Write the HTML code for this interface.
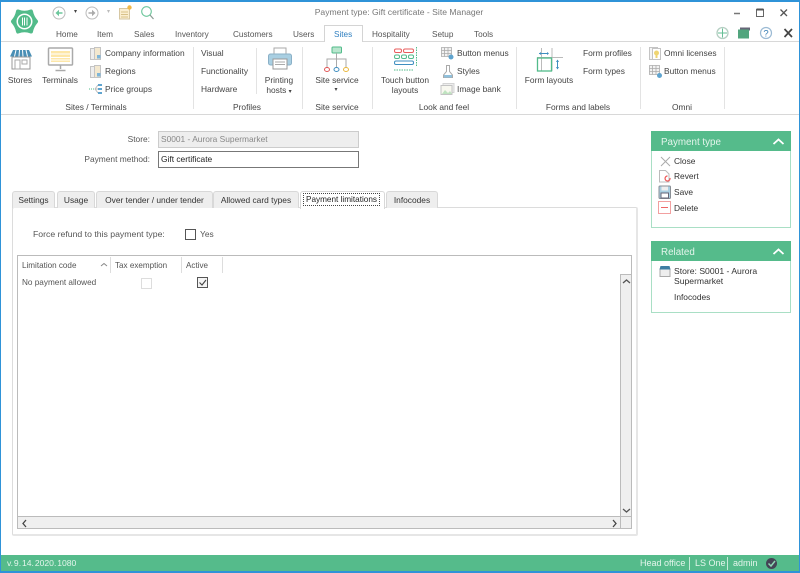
<!DOCTYPE html>
<html><head><meta charset="utf-8"><style>
html,body{margin:0;padding:0;background:#fff}
#r{position:relative;width:800px;height:573px;overflow:hidden;background:#fff;font-family:"Liberation Sans",sans-serif;font-size:8.4px;color:#444;filter:blur(.3px)}
#r div,#r svg{position:absolute}
.t{white-space:nowrap;line-height:11px}
.c{text-align:center;transform:translateX(-50%)}
.r{transform:translateX(-100%)}
.sep{width:1px;background:#e3e3e3}
.m{font-size:8.2px;top:29px;color:#555}
.tab{height:16px;line-height:17px;text-align:center;background:#eee;border:1px solid #d8d8d8;border-bottom:0;border-radius:3px 3px 0 0;color:#333;font-size:8.4px;top:191px}
</style></head><body><div id="r">
<div style="left:0;top:0;width:800px;height:2px;background:#2f93d8"></div>
<div style="left:0;top:0;width:1px;height:573px;background:#2f93d8"></div>
<div style="right:0;top:0;width:1px;height:573px;background:#2f93d8"></div>
<div style="left:0;top:571px;width:800px;height:2px;background:#2f93d8"></div>

<svg style="left:10px;top:8px" width="30" height="27" viewBox="0 0 30 27"><path d="M8 3.500Q14.500 6 21 3.500Q22 9 26 13.500Q22 18 21 23.500Q14.500 21 8 23.500Q7 18 3 13.500Q7 9 8 3.500z" fill="#52bb8a" stroke="#52bb8a" stroke-width="4" stroke-linejoin="round"/><circle cx="14.500" cy="13.500" r="8" fill="#fff"/><circle cx="14.500" cy="13.500" r="6.500" fill="#52bb8a"/><path d="M12.500 9.500v8M14.500 9.500v8M17 9.500v8" stroke="#fff" stroke-width="1"/></svg>
<svg style="left:52px;top:6px" width="14" height="14"><circle cx="7" cy="7" r="6" fill="#fff" stroke="#bbb"/><path d="M10.500 7H6" stroke="#6cc79c" stroke-width="1.500"/><path d="M7 3.800L3.500 7 7 10.200z" fill="#6cc79c"/></svg>
<div class="t" style="left:74px;top:7px;font-size:6px">▾</div>
<svg style="left:85px;top:6px" width="14" height="14"><circle cx="7" cy="7" r="6" fill="#fff" stroke="#bbb"/><path d="M3.500 7H8" stroke="#aaa" stroke-width="1.500"/><path d="M7 3.800L10.500 7 7 10.200z" fill="#aaa"/></svg>
<div class="t" style="left:107px;top:7px;font-size:6px;color:#bbb">▾</div>
<svg style="left:118px;top:4px" width="15" height="16"><rect x="1.500" y="4.500" width="10" height="10.500" fill="#fbeed0" stroke="#d6c7a3"/><path d="M3 8h7M3 10.500h7M3 13h7" stroke="#d8c189"/><circle cx="11.500" cy="3.500" r="2.200" fill="#f0b848"/></svg>
<svg style="left:140px;top:5px" width="15" height="15"><circle cx="6.500" cy="6.500" r="4.800" fill="none" stroke="#6cc79c" stroke-width="1.100"/><path d="M10 10l3.500 4" stroke="#8a9a92" stroke-width="1.200"/></svg>

<div class="t c" style="left:399px;top:7px;color:#777;font-size:8.600px">Payment type: Gift certificate - Site Manager</div>
<svg style="left:730px;top:5px" width="60" height="16"><path d="M4 8.500h6" stroke="#777" stroke-width="1.500"/><rect x="26.500" y="4.500" width="7" height="7" fill="none" stroke="#666"/><path d="M26.500 4.500h7" stroke="#555" stroke-width="2"/><path d="M50.500 4.500l6.500 6.500M57 4.500L50.500 11" stroke="#555" stroke-width="1.300"/></svg>
<svg style="left:715px;top:26px" width="80" height="16"><circle cx="7.500" cy="7" r="5.500" fill="#fff" stroke="#b5cfc2" stroke-width="1.300"/><path d="M7.500 2.500v9M3 7h9" stroke="#65bf95"/><rect x="25" y="1.500" width="10" height="3" fill="#667"/><rect x="23" y="3.500" width="11" height="9" fill="#52a57e"/><circle cx="51" cy="7" r="5.500" fill="#fff" stroke="#9bbad4" stroke-width="1.200"/><text x="51" y="10.500" text-anchor="middle" font-size="9.500" font-family="Liberation Sans" fill="#3a7fb5">?</text><path d="M69.500 3l7.500 8M77 3l-7.500 8" stroke="#444" stroke-width="1.700"/></svg>

<div class="t m" style="left:56px">Home</div>
<div class="t m" style="left:97px">Item</div>
<div class="t m" style="left:134px">Sales</div>
<div class="t m" style="left:175px">Inventory</div>
<div class="t m" style="left:233px">Customers</div>
<div class="t m" style="left:293px">Users</div>
<div style="left:324px;top:25px;width:37px;height:16px;border:1px solid #d4d4d4;border-bottom:0;background:#fff;z-index:2"></div>
<div class="t m" style="left:334px;color:#2f7fc0;z-index:3">Sites</div>
<div class="t m" style="left:372px">Hospitality</div>
<div class="t m" style="left:432px">Setup</div>
<div class="t m" style="left:474px">Tools</div>
<div style="left:1px;top:41px;width:798px;height:1px;background:#d8d8d8"></div>
<div style="left:1px;top:114px;width:798px;height:1px;background:#d8d8d8"></div>

<!-- Ribbon icons -->
<svg style="left:9px;top:48px" width="24" height="22"><rect x="3" y="9" width="18" height="12" fill="#fff" stroke="#999"/><path d="M4 2h16l3 6.500H1z" fill="#4a8fb5"/><path d="M7 2L5.500 8.500M10.500 2L10 8.500M13.500 2l.5 6.500M17 2l1.500 6.500" stroke="#fff"/><rect x="6" y="12" width="5" height="9" fill="#fff" stroke="#aaa"/><rect x="13" y="12" width="5" height="4" fill="#fff" stroke="#aaa"/></svg>
<svg style="left:47px;top:47px" width="28" height="26"><rect x="1.500" y="1" width="24" height="17" rx="1" fill="#fff" stroke="#aaa" stroke-width="1.500"/><rect x="4" y="4" width="19" height="11" fill="#fde7a8"/><path d="M4 7h19M4 10.500h19M4 13h19" stroke="#fff"/><path d="M13.500 18v4M8.500 23.500h10" stroke="#aaa" stroke-width="1.500"/></svg>
<svg style="left:89px;top:46px" width="13" height="15"><path d="M1.500 2.500h4v11h-4z" fill="#eee" stroke="#c4c4c4"/><path d="M5.500 1.500h6v12h-6z" fill="#f3e8cf" stroke="#c4c4c4"/><rect x="8" y="9" width="3.500" height="3.500" fill="#7eb5d8"/></svg>
<svg style="left:89px;top:64px" width="13" height="15"><path d="M1.500 2.500h4v11h-4z" fill="#eee" stroke="#c4c4c4"/><path d="M5.500 1.500h6v12h-6z" fill="#f3e8cf" stroke="#c4c4c4"/><rect x="8" y="9" width="3.500" height="3.500" fill="#7eb5d8"/></svg>
<svg style="left:89px;top:83px" width="14" height="13"><path d="M0 6h5" stroke="#52bb8a" stroke-dasharray="1 1"/><path d="M6 6l3-4M6 6l3 0M6 6l3 4" stroke="#bbb"/><path d="M9 1h4v2H9zM9 5h4v2H9zM9 9h4v2H9z" fill="#5fa4cf"/></svg>
<svg style="left:267px;top:47px" width="26" height="24"><rect x="7" y="1" width="12" height="7" fill="#fff" stroke="#aaa"/><rect x="1.500" y="7" width="23" height="11" rx="2" fill="#a9cfe2" stroke="#8ab0c7"/><rect x="6" y="12" width="14" height="10" fill="#fff" stroke="#999"/><path d="M8 15h10M8 17.500h10" stroke="#aaa"/></svg>
<svg style="left:322px;top:46px" width="30" height="27"><rect x="10" y="1" width="9.500" height="6" rx="1" fill="#b9e6ce" stroke="#52bb8a"/><path d="M14.500 7v6M5 21v-8h19v8M14.500 13v8" stroke="#aaa" fill="none"/><ellipse cx="5" cy="23.500" rx="2.500" ry="2" fill="#fff" stroke="#e05555"/><ellipse cx="14.500" cy="23.500" rx="2.500" ry="2" fill="#fff" stroke="#3f8ec0"/><ellipse cx="24" cy="23.500" rx="2.500" ry="2" fill="#fff" stroke="#e9b63c"/></svg>
<svg style="left:392px;top:46px" width="26" height="27"><rect x="2.500" y="3" width="7" height="3.500" rx="1.500" fill="none" stroke="#e85d5d"/><rect x="11.500" y="3" width="10" height="3.500" rx="1.500" fill="none" stroke="#e85d5d"/><rect x="2.500" y="9" width="5" height="3.500" rx="1.500" fill="none" stroke="#52bb8a"/><rect x="9.500" y="9" width="5" height="3.500" rx="1.500" fill="none" stroke="#52bb8a"/><rect x="16.500" y="9" width="5" height="3.500" rx="1.500" fill="none" stroke="#52bb8a"/><rect x="2.500" y="15" width="19" height="3.500" rx="1.500" fill="none" stroke="#3f8ec0"/><path d="M24.500 1v20" stroke="#52bb8a" stroke-dasharray="1.500 1"/><path d="M2 24h19" stroke="#52bb8a" stroke-dasharray="1.500 1"/></svg>
<svg style="left:440px;top:46px" width="14" height="15"><path d="M1.500 1.500h10v9h-10zM1.500 4.500h10M1.500 7.500h10M4.500 1.500v9M8 1.500v9" fill="#f2f2f2" stroke="#aaa" stroke-width=".8"/><circle cx="11" cy="11" r="2.500" fill="#5fa4cf"/></svg>
<svg style="left:442px;top:64px" width="12" height="15"><path d="M4.500 1.500h3v6l3 3.500v2.500h-9V11l3-3.500z" fill="#fff" stroke="#aaa"/><path d="M2 11h8v2.500H2z" fill="#8fc0dc"/></svg>
<svg style="left:440px;top:82px" width="15" height="14"><rect x="3" y="1.500" width="11" height="9" fill="#eee" stroke="#d4d4d4"/><rect x="1" y="3.500" width="11" height="9" fill="#f8f8f0" stroke="#c4c4c4"/><path d="M2 12l3-4 3 3 2-2 2 3" fill="#bfe3c0" stroke="none"/></svg>
<svg style="left:536px;top:47px" width="28" height="26"><path d="M5.500 1v23M16 1v23M1 10.500h26" stroke="#bbb"/><rect x="1.500" y="11" width="14" height="13" fill="none" stroke="#52bb8a" stroke-width="1.300"/><path d="M3 6.500h9.500" stroke="#3f8ec0"/><path d="M3 6.500l2-1.500v3zM13 6.500l-2-1.500v3z" fill="#3f8ec0"/><path d="M21.500 13v9" stroke="#3f8ec0"/><path d="M21.500 12.500L20 15h3zM21.500 22.500L20 20h3z" fill="#3f8ec0"/></svg>
<svg style="left:648px;top:46px" width="14" height="15"><rect x="1.500" y="1.500" width="8" height="12" fill="#f5f5f5" stroke="#c4c4c4"/><rect x="4.500" y="2.500" width="8" height="11" fill="#fff" stroke="#c4c4c4"/><circle cx="8.500" cy="7" r="2.500" fill="#efd572"/><path d="M7.500 9h2v3h-2z" fill="#efd572"/></svg>
<svg style="left:648px;top:64px" width="15" height="15"><path d="M1.500 1.500h10v9h-10zM1.500 4.500h10M1.500 7.500h10M4.500 1.500v9M8 1.500v9" fill="#f2f2f2" stroke="#aaa" stroke-width=".8"/><circle cx="11.500" cy="11.500" r="2.500" fill="#5fa4cf"/></svg>

<div class="t c" style="left:20px;top:75px">Stores</div>
<div class="t c" style="left:60px;top:75px">Terminals</div>
<div class="t" style="left:105px;top:48px">Company information</div>
<div class="t" style="left:105px;top:66px">Regions</div>
<div class="t" style="left:105px;top:84px">Price groups</div>
<div class="t c" style="left:96px;top:102px">Sites / Terminals</div>
<div class="t" style="left:201px;top:48px">Visual</div>
<div class="t" style="left:201px;top:66px">Functionality</div>
<div class="t" style="left:201px;top:84px">Hardware</div>
<div class="t c" style="left:247px;top:102px">Profiles</div>
<div class="t c" style="left:279px;top:75px">Printing</div>
<div class="t c" style="left:279px;top:85px">hosts <span style="font-size:6px">▾</span></div>
<div class="t c" style="left:337px;top:75px">Site service</div>
<div class="t c" style="left:336px;top:85px;font-size:6px">▾</div>
<div class="t c" style="left:337px;top:102px">Site service</div>
<div class="t c" style="left:405px;top:75px">Touch button</div>
<div class="t c" style="left:405px;top:85px">layouts</div>
<div class="t" style="left:457px;top:48px">Button menus</div>
<div class="t" style="left:457px;top:66px">Styles</div>
<div class="t" style="left:457px;top:84px">Image bank</div>
<div class="t c" style="left:444px;top:102px">Look and feel</div>
<div class="t c" style="left:549px;top:75px">Form layouts</div>
<div class="t" style="left:583px;top:48px">Form profiles</div>
<div class="t" style="left:583px;top:66px">Form types</div>
<div class="t c" style="left:578px;top:102px">Forms and labels</div>
<div class="t" style="left:664px;top:48px">Omni licenses</div>
<div class="t" style="left:664px;top:66px">Button menus</div>
<div class="t c" style="left:682px;top:102px">Omni</div>
<div class="sep" style="left:193px;top:47px;height:62px"></div>
<div class="sep" style="left:256px;top:48px;height:46px"></div>
<div class="sep" style="left:302px;top:47px;height:62px"></div>
<div class="sep" style="left:372px;top:47px;height:62px"></div>
<div class="sep" style="left:516px;top:47px;height:62px"></div>
<div class="sep" style="left:640px;top:47px;height:62px"></div>
<div class="sep" style="left:724px;top:47px;height:62px"></div>

<!-- Form -->
<div class="t r" style="left:150px;top:134px;color:#555">Store:</div>
<div class="t r" style="left:150px;top:154px;color:#555">Payment method:</div>
<div class="t" style="left:158px;top:131px;width:199px;height:15px;border:1px solid #ccc;background:#eee;color:#888;line-height:15px;text-indent:2px">S0001 - Aurora Supermarket</div>
<div class="t" style="left:158px;top:151px;width:199px;height:15px;border:1px solid #777;background:#fff;color:#222;line-height:15px;text-indent:2px">Gift certificate</div>

<!-- Tab panel -->
<div style="left:12px;top:207px;width:623px;height:326px;border:1px solid #dcdcdc;border-right:2px solid #e6e6e6;border-bottom:2px solid #e6e6e6;border-radius:2px;background:#fff"></div>
<div class="t tab" style="left:12px;width:41px">Settings</div>
<div class="t tab" style="left:57px;width:36px">Usage</div>
<div class="t tab" style="left:96px;width:115px">Over tender / under tender</div>
<div class="t tab" style="left:213px;width:84px">Allowed card types</div>
<div style="left:300px;top:191px;width:83px;height:17px;background:#fff;border:1px solid #d8d8d8;border-bottom:0;border-radius:3px 3px 0 0"></div>
<div class="t" style="left:304px;top:194px;width:75px;height:11px;line-height:11px;text-align:center;outline:1px dotted #444;color:#222;font-size:8.200px">Payment limitations</div>
<div class="t tab" style="left:386px;width:50px">Infocodes</div>

<div class="t" style="left:33px;top:229px;color:#555;font-size:8.700px">Force refund to this payment type:</div>
<div style="left:185px;top:229px;width:9px;height:9px;border:1px solid #555;background:#fff"></div>
<div class="t" style="left:200px;top:229px;color:#555">Yes</div>

<!-- Grid -->
<div style="left:17px;top:255px;width:615px;height:274px;border:1px solid #bbb;background:#fff;box-sizing:border-box"></div>
<div style="left:110px;top:257px;width:1px;height:16px;background:#ddd"></div>
<div style="left:181px;top:257px;width:1px;height:16px;background:#ddd"></div>
<div style="left:222px;top:257px;width:1px;height:16px;background:#ddd"></div>
<div class="t" style="left:22px;top:260px;color:#555;font-size:8.100px">Limitation code</div>
<svg style="left:100px;top:262px" width="8" height="6"><path d="M1 4l3-2.500L7 4" fill="none" stroke="#888"/></svg>
<div class="t" style="left:115px;top:260px;color:#555;font-size:8.100px">Tax exemption</div>
<div class="t" style="left:186px;top:260px;color:#555;font-size:8.100px">Active</div>
<div class="t" style="left:22px;top:277px;color:#555;font-size:8.200px">No payment allowed</div>
<div style="left:141px;top:278px;width:9px;height:9px;border:1px solid #ddd;background:#fff"></div>
<svg style="left:197px;top:277px" width="12" height="12"><rect x=".5" y=".5" width="10" height="10" fill="#f4f4f4" stroke="#555"/><path d="M2.500 5.500l2.500 2.500 4-5" fill="none" stroke="#444" stroke-width="1.100"/></svg>
<!-- scrollbars -->
<div style="left:620px;top:274px;width:10px;height:242px;background:#efefef;border-left:1px solid #bbb;border-top:1px solid #bbb"></div>
<div style="left:18px;top:516px;width:613px;height:11px;background:#efefef;border-top:1px solid #bbb"></div>
<div style="left:620px;top:516px;width:1px;height:12px;background:#bbb"></div>
<svg style="left:622px;top:278px" width="9" height="7"><path d="M1 5l3.500-3L8 5" fill="none" stroke="#555" stroke-width="1.300"/></svg>
<svg style="left:622px;top:507px" width="9" height="7"><path d="M1 2l3.500 3L8 2" fill="none" stroke="#555" stroke-width="1.300"/></svg>
<svg style="left:21px;top:519px" width="7" height="9"><path d="M5 1L2 4.500 5 8" fill="none" stroke="#444" stroke-width="1.300"/></svg>
<svg style="left:611px;top:519px" width="7" height="9"><path d="M2 1l3 3.500L2 8" fill="none" stroke="#444" stroke-width="1.300"/></svg>

<!-- Side panels -->
<div style="left:651px;top:151px;width:138px;height:76px;border:1px solid #a9dfc5;border-top:0;background:#fff"></div>
<div style="left:651px;top:131px;width:140px;height:20px;background:#55bb8b"></div>
<div class="t" style="left:661px;top:137px;color:#e4f5ec;font-size:9.800px;line-height:12px">Payment type</div>
<svg style="left:772px;top:137px" width="13" height="9"><path d="M1.500 7L6.500 2.500 11.500 7" fill="none" stroke="#fff" stroke-width="1.800"/></svg>
<svg style="left:659px;top:155px" width="13" height="13"><path d="M2 2l9 9M11 2l-9 9" stroke="#aaa"/></svg>
<svg style="left:658px;top:169px" width="14" height="15"><path d="M1.500 1.500h6l3.500 3.500v8h-9.500z" fill="#fff" stroke="#bbb"/><path d="M12 9a2.500 2.500 0 1 1-2.500-2" fill="none" stroke="#e55" stroke-width="1.200"/></svg>
<svg style="left:658px;top:185px" width="14" height="15"><rect x="1" y="1" width="11.500" height="12.500" rx="1" fill="#a9cfe2" stroke="#8a8f95"/><rect x="3.500" y="1.500" width="6.500" height="4" fill="#eee"/><rect x="3" y="8" width="7.500" height="5" fill="#fff" stroke="#667"/></svg>
<svg style="left:658px;top:201px" width="14" height="14"><rect x=".5" y=".5" width="12" height="12" fill="#fff" stroke="#f2a0a0"/><path d="M3 6.500h7" stroke="#e66"/></svg>
<div class="t" style="left:674px;top:156px;color:#333">Close</div>
<div class="t" style="left:674px;top:171px;color:#333">Revert</div>
<div class="t" style="left:674px;top:187px;color:#333">Save</div>
<div class="t" style="left:674px;top:203px;color:#333">Delete</div>

<div style="left:651px;top:261px;width:138px;height:51px;border:1px solid #a9dfc5;border-top:0;background:#fff"></div>
<div style="left:651px;top:241px;width:140px;height:20px;background:#55bb8b"></div>
<div class="t" style="left:661px;top:247px;color:#e4f5ec;font-size:9.800px;line-height:12px">Related</div>
<svg style="left:772px;top:247px" width="13" height="9"><path d="M1.500 7L6.500 2.500 11.500 7" fill="none" stroke="#fff" stroke-width="1.800"/></svg>
<svg style="left:659px;top:265px" width="12" height="12"><rect x="1" y="4" width="10" height="7.500" fill="#eee" stroke="#aaa"/><path d="M1.500 1h9l1 3.500H.5z" fill="#3f7ea3"/></svg>
<div class="t" style="left:674px;top:266px;color:#333;line-height:10px;font-size:8.600px">Store: S0001 - Aurora<br>Supermarket</div>
<div class="t" style="left:674px;top:292px;color:#333">Infocodes</div>

<!-- Status bar -->
<div style="left:1px;top:555px;width:798px;height:16px;background:#55bb8b"></div>
<div class="t" style="left:7px;top:558px;color:#e4f5ec;font-size:8.600px;word-spacing:-1.500px">v. 9. 14. 2020. 1080</div>
<div class="t" style="left:640px;top:558px;color:#e4f5ec;font-size:9px">Head office</div>
<div style="left:689px;top:557px;width:1px;height:13px;background:#c5ebd8"></div>
<div class="t" style="left:695px;top:558px;color:#e4f5ec;font-size:9px">LS One</div>
<div style="left:727px;top:557px;width:1px;height:13px;background:#c5ebd8"></div>
<div class="t" style="left:733px;top:558px;color:#e4f5ec;font-size:9px">admin</div>
<svg style="left:765px;top:557px" width="13" height="13"><circle cx="6.500" cy="6.500" r="5.500" fill="#445"/><path d="M3.500 6.500l2.500 2.500 4-5" fill="none" stroke="#8fd8b5" stroke-width="1.500"/></svg>
</div></body></html>
